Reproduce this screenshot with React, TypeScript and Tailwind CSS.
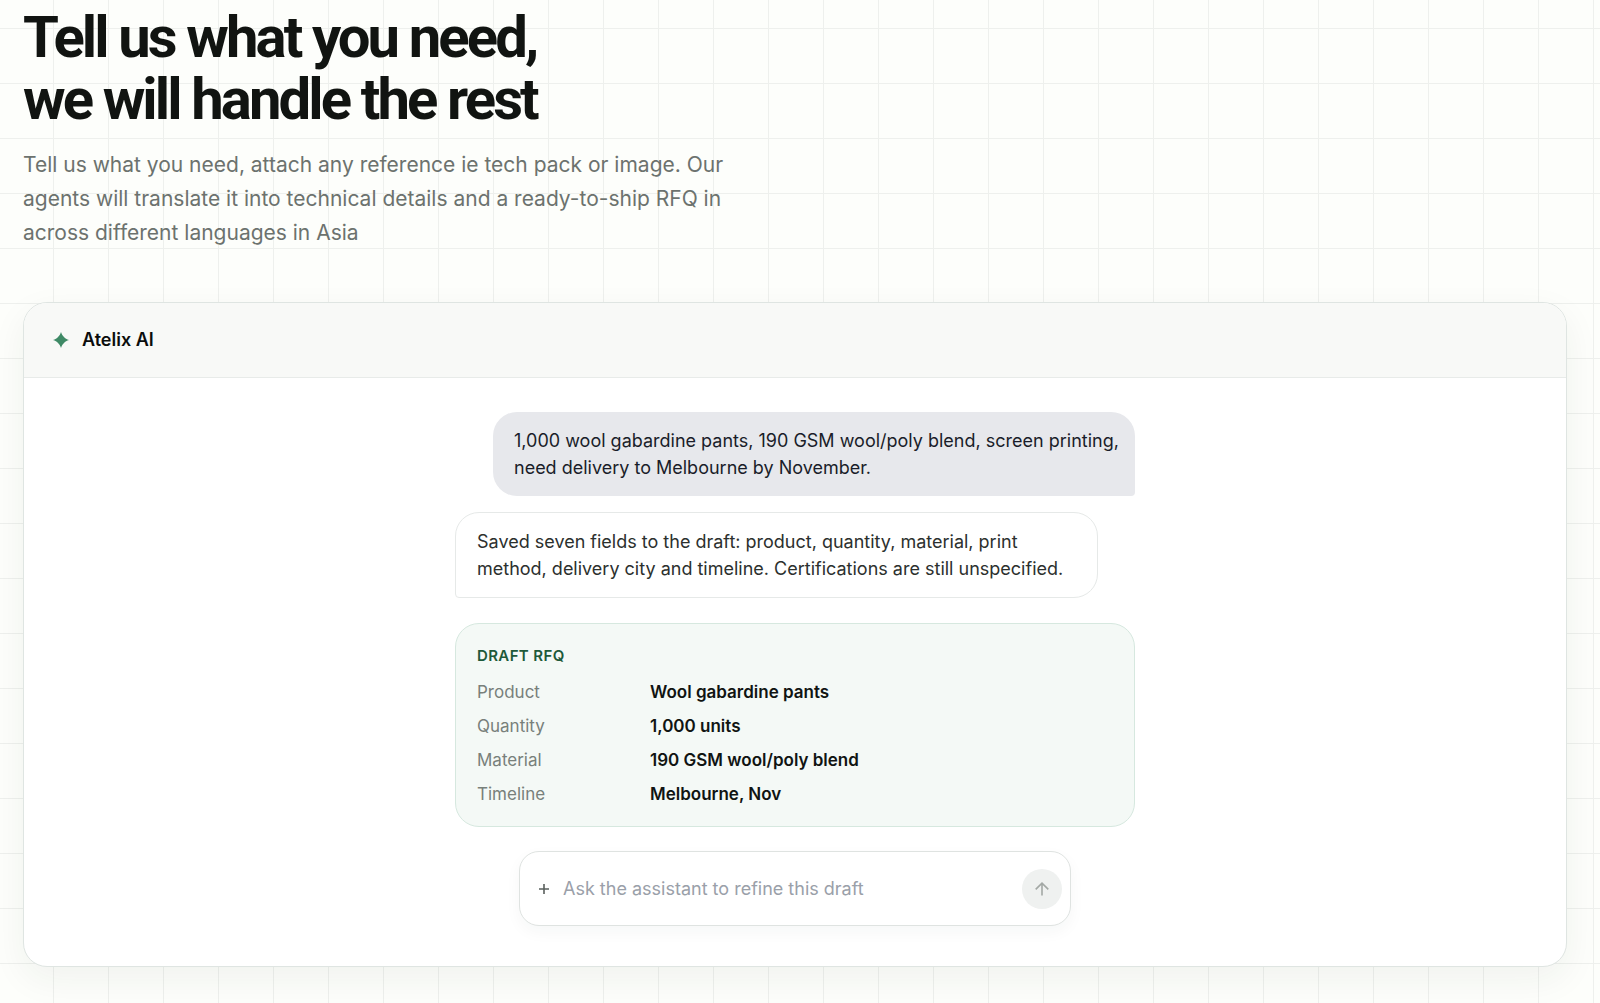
import React from "react";

const draft = [
  ["Product", "Wool gabardine pants"],
  ["Quantity", "1,000 units"],
  ["Material", "190 GSM wool/poly blend"],
  ["Timeline", "Melbourne, Nov"],
];

function Sparkle() {
  return (
    <svg viewBox="0 0 16 16" className="size-4 fill-[#3f8a66]" aria-hidden="true">
      <path d="M8 0 C8.6 2.2 9.8 3.9 11 5 C12.1 6.2 13.8 7.3 16 8 C13.8 8.7 12.1 9.8 11 11 C9.8 12.1 8.6 13.8 8 16 C7.4 13.8 6.2 12.1 5 11 C3.9 9.8 2.2 8.7 0 8 C2.2 7.3 3.9 6.2 5 5 C6.2 3.9 7.4 2.2 8 0 Z" />
    </svg>
  );
}

function ArrowUp() {
  return (
    <svg viewBox="0 0 16 16" className="size-4 fill-none stroke-[#a3a8a5] stroke-[1.6]" aria-hidden="true">
      <path d="M8 14.5 V2.2 M1.7 8.4 L8 2.2 L14.3 8.4" />
    </svg>
  );
}

function Plus() {
  return (
    <svg viewBox="0 0 12 12" className="size-3 fill-none stroke-[#5a605d] stroke-[1.6]" aria-hidden="true">
      <path d="M6 1 V11 M1 6 H11" />
    </svg>
  );
}

export default function App() {
  return (
    <main className="min-h-screen bg-[#fdfefb] bg-[linear-gradient(to_right,#eef0ed_1px,transparent_1px),linear-gradient(to_bottom,#eef0ed_1px,transparent_1px)] bg-size-[55px_55px] bg-position-[53px_28px] pt-[6px] pr-[33px] pb-9 pl-[23px] font-['Inter',sans-serif]">
      <h1 className="font-['Roboto',sans-serif] text-[58px] leading-[62px] font-bold tracking-tighter text-[#111411]">
        Tell us what you need,
        <br />
        we will handle the rest
      </h1>
      <p className="mt-[18px] max-w-[720px] text-[21px] leading-[34px] text-[#6c726e]">
        Tell us what you need, attach any reference ie tech pack or image. Our agents will translate it into technical
        details and a ready-to-ship RFQ in across different languages in Asia
      </p>

      <section className="mt-[52px] overflow-hidden rounded-3xl border border-[#dfe5e2] bg-white shadow-[0_12px_36px_rgba(30,50,40,0.06)]">
        <header className="flex h-[75px] items-center gap-[13px] border-b border-[#e8ebe9] bg-[#f8f9f7] px-[29px]">
          <Sparkle />
          <h2 className="text-[18px] leading-6 font-semibold text-[#0b0d0c]">Atelix AI</h2>
        </header>

        <div className="mx-auto flex max-w-[680px] flex-col pt-[34px] pb-10 text-[18px]">
          <p className="max-w-[642px] self-end rounded-3xl rounded-br-sm bg-[#e7e8ec] py-[15px] pr-[14px] pl-[21px] leading-[27px] text-[#1a1d29]">
            1,000 wool gabardine pants, 190 GSM wool/poly blend, screen printing, need delivery to Melbourne by November.
          </p>
          <p className="mt-4 w-full max-w-[643px] rounded-3xl rounded-bl-sm border border-[#e6e9e8] bg-white px-[21px] py-[15px] leading-[27px] text-[#2c302e]">
            Saved seven fields to the draft: product, quantity, material, print method, delivery city and timeline.
            Certifications are still unspecified.
          </p>

          <section className="mt-[25px] rounded-3xl border border-[#d6e8df] bg-[#f4f9f6] px-[21px] py-5">
            <h3 className="text-[15px] leading-6 font-semibold tracking-wide text-[#1d5a3a]">DRAFT RFQ</h3>
            <dl className="mt-3 grid grid-cols-[163px_1fr] gap-[10px] text-[17px] leading-6">
              {draft.map(([label, value]) => (
                <React.Fragment key={label}>
                  <dt className="text-[#78807b]">{label}</dt>
                  <dd className="font-semibold text-[#101412]">{value}</dd>
                </React.Fragment>
              ))}
            </dl>
          </section>

          <form
            onSubmit={(e) => e.preventDefault()}
            className="mt-6 flex h-[75px] w-full max-w-[552px] items-center self-center rounded-[20px] border border-[#dfe3e1] bg-white pr-2 pl-[18px] shadow-[0_6px_16px_rgba(30,50,40,0.04)]"
          >
            <button type="button" aria-label="Attach a file" className="p-0">
              <Plus />
            </button>
            <input
              type="text"
              aria-label="Ask the assistant to refine this draft"
              placeholder="Ask the assistant to refine this draft"
              className="ml-[13px] min-w-0 flex-1 bg-transparent leading-6 outline-none placeholder:text-[#9aa0a9]"
            />
            <button
              type="submit"
              aria-label="Send"
              className="flex size-10 items-center justify-center rounded-full bg-[#eff1f0]"
            >
              <ArrowUp />
            </button>
          </form>
        </div>
      </section>
    </main>
  );
}
